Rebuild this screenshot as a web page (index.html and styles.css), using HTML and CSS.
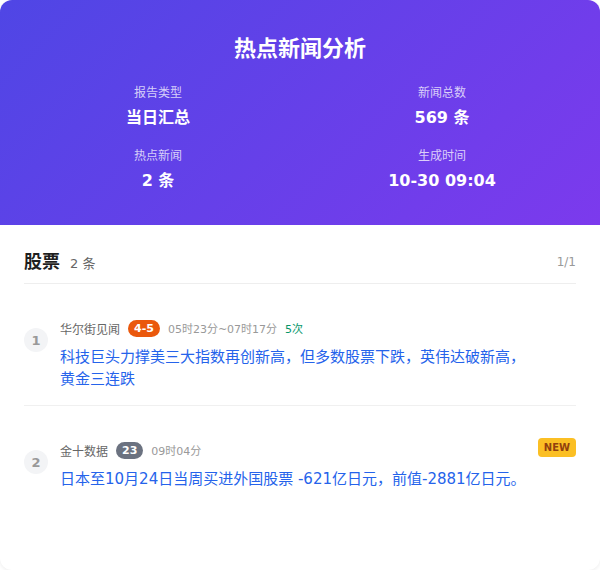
FILE: index.html
```html
<!DOCTYPE html>
<html lang="zh-CN">
<head>
<meta charset="utf-8">
<title>热点新闻分析</title>
<link rel="stylesheet" href="styles.css">
</head>
<body>
<div class="card">
  <header class="hero">
    <h1 class="hero-title">热点新闻分析</h1>
    <div class="stats">
      <div class="stat">
        <div class="stat-label">报告类型</div>
        <div class="stat-value">当日汇总</div>
      </div>
      <div class="stat">
        <div class="stat-label">新闻总数</div>
        <div class="stat-value">569 条</div>
      </div>
      <div class="stat">
        <div class="stat-label">热点新闻</div>
        <div class="stat-value">2 条</div>
      </div>
      <div class="stat">
        <div class="stat-label">生成时间</div>
        <div class="stat-value">10-30 09:04</div>
      </div>
    </div>
  </header>
  <section class="group">
    <div class="group-head">
      <span class="group-name">股票</span>
      <span class="group-count">2 条</span>
      <span class="group-page">1/1</span>
    </div>
    <div class="item">
      <div class="rank">1</div>
      <div class="item-body">
        <div class="meta">
          <span class="source">华尔街见闻</span>
          <span class="badge badge-hot">4-5</span>
          <span class="time">05时23分~07时17分</span>
          <span class="times">5次</span>
        </div>
        <div class="item-title">科技巨头力撑美三大指数再创新高，但多数股票下跌，英伟达破新高，黄金三连跌</div>
      </div>
    </div>
    <div class="item">
      <div class="rank">2</div>
      <div class="item-body">
        <div class="meta">
          <span class="source">金十数据</span>
          <span class="badge badge-gray">23</span>
          <span class="time">09时04分</span>
        </div>
        <div class="item-title">日本至10月24日当周买进外国股票 -621亿日元，前值-2881亿日元。</div>
      </div>
      <span class="new-tag">NEW</span>
    </div>
  </section>
</div>
</body>
</html>
```

FILE: styles.css
```css
* { box-sizing: border-box; }
html, body {
  margin: 0;
  padding: 0;
  background: #ffffff;
}
body {
  font-family: "DejaVu Sans", "Noto Sans CJK SC", sans-serif;
  color: #333;
}
.card {
  width: 600px;
  min-height: 570px;
  background: #fff;
  border-radius: 12px;
  overflow: hidden;
  box-shadow: 0 1px 4px rgba(0, 0, 0, 0.08);
}
.hero {
  background: linear-gradient(135deg, #4f46e5 0%, #7c3aed 100%);
  color: #fff;
  padding: 34px 24px 32px;
}
.hero-title {
  margin: 0 0 20px;
  font-size: 22px;
  line-height: 30px;
  font-weight: 700;
  text-align: center;
}
.stats {
  display: grid;
  grid-template-columns: 1fr 1fr;
  column-gap: 16px;
  row-gap: 17px;
}
.stat {
  text-align: center;
}
.stat-label {
  font-size: 12px;
  line-height: 18px;
  color: rgba(255, 255, 255, 0.75);
  margin-bottom: 4px;
}
.stat-value {
  font-size: 16px;
  line-height: 24px;
  font-weight: 700;
}
.group {
  padding: 24px 24px 0;
}
.group-head {
  display: flex;
  align-items: center;
  padding-bottom: 8px;
  border-bottom: 1px solid #eeeeee;
}
.group-name {
  font-size: 18px;
  line-height: 26px;
  font-weight: 700;
  color: #1f1f1f;
}
.group-count {
  margin-left: 10px;
  font-size: 13px;
  color: #666;
}
.group-page {
  margin-left: auto;
  font-size: 12px;
  color: #999;
}
.item {
  display: flex;
  align-items: flex-start;
  padding: 31px 0 15px;
  border-bottom: 1px solid #f0f0f0;
}
.item:last-child {
  border-bottom: none;
}
.rank {
  flex: none;
  width: 24px;
  height: 24px;
  margin-top: 13px;
  margin-right: 12px;
  border-radius: 50%;
  background: #f3f4f6;
  color: #999;
  font-size: 13px;
  font-weight: 700;
  display: flex;
  align-items: center;
  justify-content: center;
}
.item-body {
  flex: 1;
  min-width: 0;
  padding-right: 48px;
}
.meta {
  display: flex;
  align-items: center;
  gap: 8px;
  min-height: 26px;
  margin-bottom: 5px;
  font-size: 12px;
}
.source {
  color: #666;
}
.badge {
  display: inline-flex;
  align-items: center;
  justify-content: center;
  height: 17px;
  padding: 0 6px;
  border-radius: 9px;
  color: #fff;
  font-size: 11px;
  font-weight: 700;
}
.badge-hot {
  background: #ea580c;
}
.badge-gray {
  background: #6b7280;
}
.time {
  font-size: 11px;
  color: #999;
}
.times {
  font-size: 11px;
  color: #059669;
}
.item-title {
  font-size: 15px;
  line-height: 22px;
  color: #2563eb;
}
.new-tag {
  flex: none;
  margin-left: -37px;
  margin-top: 1px;
  align-self: flex-start;
  background: #fbbf24;
  color: #92400e;
  font-size: 10px;
  font-weight: 700;
  line-height: 15px;
  padding: 2px 6px;
  border-radius: 4px;
}
```
